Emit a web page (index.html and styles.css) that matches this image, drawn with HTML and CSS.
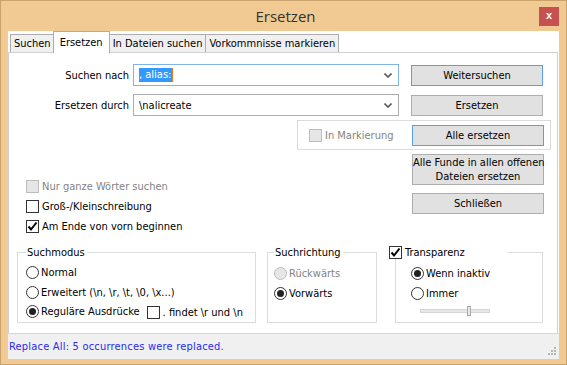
FILE: index.html
```html
<!DOCTYPE html>
<html lang="de">
<head>
    <meta charset="UTF-8"/>
    <title>Ersetzen</title>
    <link rel="stylesheet" href="styles.css">
</head>
<body>
<div class="window">
    <div class="titlebar">
        <span></span>
        <span class="title">Ersetzen</span>
        <span class="close">x</span>
    </div>
    <div class="client">
        <ul class="tabs">
            <li>Suchen</li>
            <li class="active">Ersetzen</li>
            <li>In Dateien suchen</li>
            <li>Vorkommnisse markieren</li>
        </ul>
        <div class="panel">
            <div class="row">
                <span class="lbl">Suchen nach</span>
                <div class="combo focus">
                    <span class="text"><span class="sel">, alias:</span><span class="caret"></span></span>
                    <svg class="arrow" width="8" height="5" viewBox="0 0 8 5"><polyline points="0.5,0.5 4,4 7.5,0.5" fill="none" stroke="#5a5a5a" stroke-width="1.6"/></svg>
                </div>
                <button class="btn default">Weitersuchen</button>
            </div>
            <div class="row row2">
                <span class="lbl">Ersetzen durch</span>
                <div class="combo">
                    <span class="text">\nalicreate</span>
                    <svg class="arrow" width="8" height="5" viewBox="0 0 8 5"><polyline points="0.5,0.5 4,4 7.5,0.5" fill="none" stroke="#5a5a5a" stroke-width="1.6"/></svg>
                </div>
                <button class="btn">Ersetzen</button>
            </div>
            <div class="markrow">
                <div class="markbox">
                    <label class="check disabled"><span class="box"></span>In Markierung</label>
                    <button class="btn default">Alle ersetzen</button>
                </div>
            </div>
            <div class="middle">
                <div class="options">
                    <label class="check disabled"><span class="box"></span>Nur ganze Wörter suchen</label>
                    <label class="check"><span class="box"></span>Groß-/Kleinschreibung</label>
                    <label class="check"><span class="box checked"><svg width="11" height="11" viewBox="0 0 11 11"><polyline points="1.5,5.5 4,8.5 9.5,1.5" fill="none" stroke="#000" stroke-width="2"/></svg></span>Am Ende von vorn beginnen</label>
                </div>
                <div class="sidebtns">
                    <button class="btn tall">Alle Funde in allen offenen<br>Dateien ersetzen</button>
                    <button class="btn">Schließen</button>
                </div>
            </div>
            <div class="groups">
                <fieldset class="group mode">
                    <legend>Suchmodus</legend>
                    <label class="radio"><span class="dot"></span>Normal</label>
                    <label class="radio"><span class="dot"></span>Erweitert (\n, \r, \t, \0, \x...)</label>
                    <div class="radiorow">
                        <label class="radio"><span class="dot on"></span>Reguläre Ausdrücke</label>
                        <label class="check"><span class="box"></span>. findet \r und \n</label>
                    </div>
                </fieldset>
                <fieldset class="group dir">
                    <legend>Suchrichtung</legend>
                    <label class="radio disabled"><span class="dot"></span>Rückwärts</label>
                    <label class="radio"><span class="dot on"></span>Vorwärts</label>
                </fieldset>
                <fieldset class="group trans">
                    <legend><label class="check"><span class="box checked"><svg width="11" height="11" viewBox="0 0 11 11"><polyline points="1.5,5.5 4,8.5 9.5,1.5" fill="none" stroke="#000" stroke-width="2"/></svg></span>Transparenz</label></legend>
                    <label class="radio"><span class="dot on"></span>Wenn inaktiv</label>
                    <label class="radio"><span class="dot"></span>Immer</label>
                    <div class="slider"><span class="thumb"></span></div>
                </fieldset>
            </div>
        </div>
        <div class="status">
            <span>Replace All: 5 occurrences were replaced.</span>
            <svg class="grip" width="9" height="9" viewBox="0 0 9 9" fill="#b5b5b5">
                <rect x="6" y="0" width="2" height="2"/>
                <rect x="3" y="3" width="2" height="2"/><rect x="6" y="3" width="2" height="2"/>
                <rect x="0" y="6" width="2" height="2"/><rect x="3" y="6" width="2" height="2"/><rect x="6" y="6" width="2" height="2"/>
            </svg>
        </div>
    </div>
</div>
</body>
</html>
```

FILE: styles.css
```css
* {
    margin: 0;
    padding: 0;
    box-sizing: border-box;
}

body {
    font-family: "DejaVu Sans Condensed", "DejaVu Sans", sans-serif;
    font-stretch: condensed;
    font-size: 11px;
    color: #000;
    background: #fff;
}

.window {
    width: 567px;
    height: 365px;
    border: 1px solid #c9a26c;
    background: #f1c992;
    padding: 0 7px 5px;
    display: flex;
    flex-direction: column;
}

/* 标题栏 */
.titlebar {
    height: 30px;
    display: grid;
    grid-template-columns: 1fr auto 1fr;
    align-items: start;
}

.titlebar .title {
    font-family: "Open Sans", "Noto Sans", sans-serif;
    font-stretch: normal;
    font-size: 15px;
    color: #333;
    line-height: 30px;
    margin-left: 4px;
}

.titlebar .close {
    justify-self: end;
    width: 20px;
    height: 19px;
    margin-top: 6px;
    background: #c75050;
    color: #fff;
    font-family: "Liberation Sans", sans-serif;
    font-weight: bold;
    font-size: 11px;
    line-height: 17px;
    text-align: center;
}

.client {
    flex: 1;
    background: #fff;
    display: flex;
    flex-direction: column;
}

/* 选项卡 */
.tabs {
    list-style: none;
    display: flex;
    height: 21px;
    padding: 3px 0 0 2px;
}

.tabs li {
    height: 18px;
    padding: 0 3px;
    border: 1px solid #acacac;
    border-bottom: none;
    margin-right: -1px;
    background: #f0f0f0;
    line-height: 18px;
}

.tabs li.active {
    height: 22px;
    margin: -3px -1px -1px -1px;
    padding: 0 6px;
    background: #fff;
    line-height: 21px;
    position: relative;
    z-index: 1;
}

.panel {
    flex: 1;
    border: 1px solid #d0d0d0;
    border-bottom: none;
    margin-right: 1px;
    padding-top: 11px;
}

.row {
    display: flex;
    align-items: center;
    height: 22px;
}

.row2 {
    margin-top: 8px;
}

.lbl {
    width: 120px;
    text-align: right;
    margin-right: 4px;
}

.combo {
    width: 266px;
    height: 22px;
    border: 1px solid #abadb3;
    display: flex;
    align-items: center;
    justify-content: space-between;
    padding: 0 5px 0 5px;
}

.combo.focus {
    border-color: #7eb4ea;
}

.combo .text {
    display: flex;
    align-items: center;
}

.sel {
    background: #3399ff;
    color: #fff;
    padding: 0 1px 1px 0;
}

.caret {
    width: 1px;
    height: 14px;
    background: #e07a2a;
}

.arrow {
    margin-right: 1px;
}

.btn {
    font: inherit;
    color: #000;
    width: 132px;
    height: 21px;
    padding: 0;
    white-space: nowrap;
    margin-left: 12px;
    background: #e1e1e1;
    border: 1px solid #adadad;
}

.btn.default {
    border-color: #5a9fe3;
}

.markrow {
    display: flex;
    justify-content: flex-end;
    margin-top: 4px;
    padding-right: 6px;
}

.markbox {
    width: 254px;
    height: 30px;
    border: 1px solid #dcdcdc;
    display: flex;
    align-items: center;
    justify-content: space-between;
    padding: 0 6px 0 11px;
}

.markbox .btn {
    margin-left: 0;
}

.check,
.radio {
    display: flex;
    align-items: center;
    height: 20px;
}

.check .box {
    width: 13px;
    height: 13px;
    border: 1px solid #333;
    background: #fff;
    margin-right: 3px;
    display: flex;
    align-items: center;
    justify-content: center;
}

.check.disabled,
.radio.disabled {
    color: #838383;
}

.check.disabled .box {
    border-color: #bcbcbc;
    background: #e6e6e6;
}

.radio .dot {
    width: 13px;
    height: 13px;
    border: 1px solid #333;
    border-radius: 50%;
    background: #fff;
    margin-right: 2px;
    display: flex;
    align-items: center;
    justify-content: center;
}

.radio .dot.on::after {
    content: "";
    width: 7px;
    height: 7px;
    border-radius: 50%;
    background: #222;
}

.radio.disabled .dot {
    border-color: #bcbcbc;
    background: #e6e6e6;
}

.middle {
    display: flex;
    justify-content: space-between;
    margin-top: 4px;
    height: 82px;
}

.options {
    display: flex;
    flex-direction: column;
    justify-content: flex-end;
    padding-left: 17px;
    padding-bottom: 0;
}

.sidebtns {
    display: flex;
    flex-direction: column;
    gap: 8px;
    padding-right: 13px;
}

.btn.tall {
    height: 31px;
    line-height: 14px;
}

/* 分组框 */
.groups {
    display: flex;
    padding-left: 8px;
    margin-top: 10px;
}

.group {
    border: 1px solid #dcdcdc;
    height: 77px;
    padding: 4px 0 0 8px;
}

.group legend {
    padding: 0 2px 0 1px;
    line-height: 13px;
}

.mode {
    width: 239px;
}

.mode .radio {
    height: 19.5px;
}

.dir {
    width: 110px;
    margin-left: 11px;
    padding-left: 6px;
}

.trans {
    width: 148px;
    margin-left: 18px;
    padding-left: 15px;
}

.trans legend {
    margin-left: -22px;
    padding: 0;
}

.trans legend .check {
    height: 13px;
    width: 119px;
}

.radiorow {
    display: flex;
    gap: 7px;
}

.slider {
    width: 70px;
    height: 4px;
    margin: 6px 0 0 9px;
    background: #e7e7e7;
    border: 1px solid #d6d6d6;
    display: flex;
    align-items: center;
    padding-left: 46px;
}

.slider .thumb {
    width: 4px;
    height: 10px;
    background: #e7e7e7;
    border: 1px solid #aaa;
}

/* 状态栏 */
.status {
    height: 26px;
    border-top: 1px solid #d7d7d7;
    background: #f0f0f0;
    color: #2a2af0;
    display: flex;
    align-items: center;
    justify-content: space-between;
    padding: 0 2px 0 1px;
    letter-spacing: 0.2px;
}

.grip {
    align-self: flex-end;
    margin-bottom: 3px;
}
```
